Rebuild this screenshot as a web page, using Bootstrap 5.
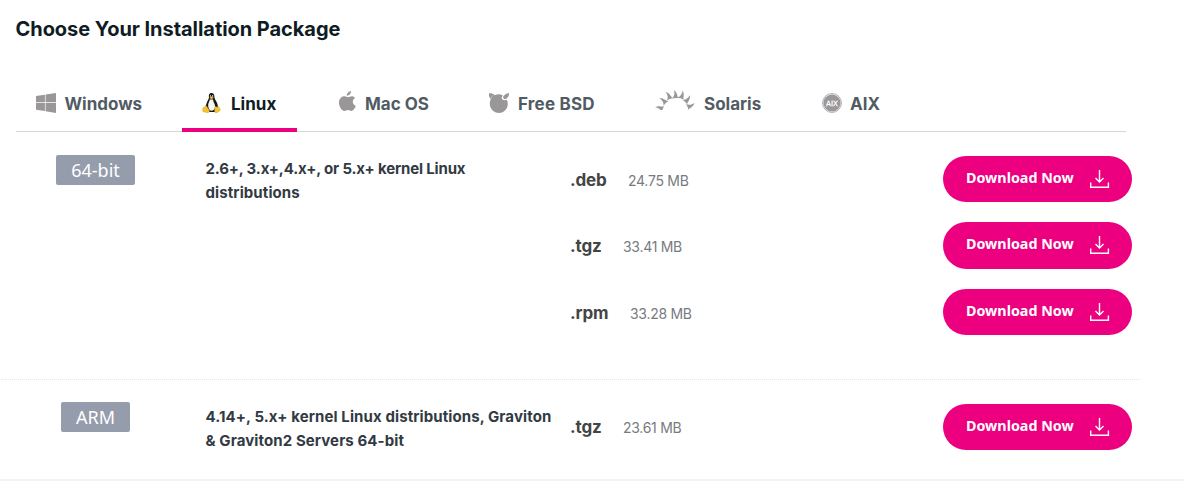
<!DOCTYPE html>
<html lang="en">
<head>
<meta charset="utf-8">
<title>Choose Your Installation Package</title>
<link rel="stylesheet" href="https://cdn.jsdelivr.net/npm/bootstrap@5.3.0/dist/css/bootstrap.min.css">
<style>
body { font-family: Inter, "Liberation Sans", sans-serif; background: #fff; overflow: hidden; }
.page-title { font-size: 20px; line-height: 28px; font-weight: 700; letter-spacing: -.05px; color: #0f1c24; padding: 15px 0 0 15.5px; height: 76px; }
.page-title span, .os-tab span, .req span, .ext, .size, .bits, .dl span { white-space: nowrap; }
.os-tabs { margin-left: 16px; width: 1110px; height: 56px; border-bottom: 1px solid #d6d6d8; gap: 20px; }
.os-tab { height: 56px; padding: 2px 20px 0; color: #525b64; font-size: 17px; font-weight: 700; letter-spacing: 0; border-bottom: 4px solid transparent; text-decoration: none; flex: none; }
.os-tab.active { color: #0f1c24; border-color: #ec0080; }
.os-tab svg { flex: none; fill: #999798; }
.os-tab span { padding-top: 4px; margin-left: 9px; }
.os-tab.w-mac span, .os-tab.w-win span, .os-tab.w-aix span { margin-left: 8px; }
.os-tab.w-bsd span { letter-spacing: .2px; }
.w-win, .w-bsd, .w-sol { width: 146px; } .w-lin { width: 115px; } .w-mac { width: 132px; } .w-aix { width: 99px; }
.w-win svg { margin-right: .4px; }
.w-sol svg { margin-bottom: 6px; }
.w-aix svg { margin-left: 1px; }
.pkg { display: grid; grid-template-columns: 189px 365px 373px 189px; margin-left: 1px; width: 1140px; padding-left: 15px; }
.pkg-x64 { height: 248px; border-bottom: 1px dotted #e8e8e8; padding-top: 23px; }
.pkg-arm { height: 99px; padding-top: 22px; }
.bits { justify-self: start; background: #959cab; color: #fff; font: 18px/31px "Noto Sans", sans-serif; height: 30px; border-radius: 2px; text-align: center; }
.bits-64 { width: 79px; margin-left: 40px; }
.bits-arm { width: 69px; margin-left: 45px; }
.req { font-size: 15px; line-height: 24px; font-weight: 700; letter-spacing: .1px; color: #323a43; margin-top: 2px; padding-left: .5px; }
.pkg-arm .req { margin-top: 3px; }
.req-tight { letter-spacing: -.16px; }
.files { row-gap: 20.2px; margin-top: 1px; }
.file { height: 46.2px; line-height: 46px; padding-top: 1px; }
.ext { font-size: 17px; font-weight: 700; letter-spacing: -.15px; color: #444; }
.ext-deb { width: 58px; } .ext-tgz { width: 53px; } .ext-rpm { width: 60px; }
.size { font-size: 14px; letter-spacing: -.28px; color: #777b80; padding-top: 1px; }
.dl { width: 189px; height: 46.2px; border-radius: 23.5px; background: #ec0080; color: #fff; font: 700 14.3px/20px "Noto Sans", sans-serif; border: 0; padding: 0 22px 0 23px; }
.dl span { padding-bottom: 2px; }
.pkg-arm .files { margin-top: 2px; }
.pkg-arm .file { padding-top: 0; }
.page-end { height: 2px; background: #f3f3f4; }
</style>
</head>
<body>
<h1 class="page-title m-0"><span>Choose Your Installation Package</span></h1>
<nav class="os-tabs d-flex">
  <a class="os-tab w-win d-flex align-items-center" href="#"><svg width="20" height="20" viewBox="0 0 20 20"><path d="M0 3 8.9 1.7V9.2H0zM9.6 1.6 20 0v9.2H9.6zM0 10.1h8.9v7.8L0 16.7zM9.6 10.1H20V20L9.6 18.2z"/></svg><span>Windows</span></a>
  <a class="os-tab active w-lin d-flex align-items-center" href="#"><svg width="20" height="20" viewBox="0 0 20 20"><path fill="#171717" d="M9.4 0C7.5 0 6.7 1.4 6.9 3.2c.2 2.4-.5 3-1.5 5-.8 1.8-1.7 4.2-1.8 6.2l3 4.6h6.2l2.9-4c.5-2.8-.4-5-1.7-7.1-1.4-2-1.4-2.7-1.6-4.6C12.3 1.2 11.2 0 9.4 0z"/><path fill="#f4f4f4" d="M7.8 6.6c-.2 1.6-1.2 3-1.6 4.7-.4 2.3.7 5.5 2.2 6.3 1.7.7 4.2-.5 4.6-2.5.4-2.7-.5-4.4-1.5-6.3l-.5-2.2z"/><path fill="#ddd" d="M8 2.3h1v1.5H8zM10 2.3h1.2v1.5H10z"/><path fill="#f2c530" stroke="#be8b12" stroke-width=".4" d="M7.5 4.8 9.4 3.6l2.2 1.1-2 1.5zM3.7 12.8c1.1 0 1.5 1.4 2.3 2.5.8 1.2 2 2.2 1.2 3.5-.9 1.4-2.2 1-3.5.5-1.1-.5-2.8-.4-3.1-1.2-.2-.8.4-1.5.2-2.7.2-1 1-.7 1.5-1.1.5-.5.6-1.4 1.4-1.5zM13 13.7c.6-.5 1 .4 1.8.4.9 0 1.3-.9 2-.4.6.6.2 1.5 1 2.2.6.6 1 .9.1 1.6-1.4.9-2.3 2.4-4 2.2-1.4-.2-1.5-1.4-1.2-2.7.2-1.2-.2-2.7.3-3.3z"/></svg><span>Linux</span></a>
  <a class="os-tab w-mac d-flex align-items-center" href="#"><svg class="mb-1" width="20" height="20" viewBox="0 0 20 20"><path d="M14 0c.2 2.5-1.9 4.8-4.2 4.7C9.6 2.5 11.7.3 14 0zM18.1 7c-3.4 2-2.8 6.4.7 7.8-.7 2-2.4 5-4.3 5.1-1.4 0-1.9-.8-3.5-.8-1.7 0-2.2.8-3.5.8C4.6 20 1.7 15 2 11c.3-4 3-5.8 5.5-5.8 1.5 0 2.6 1 3.7 1s2.3-1.1 4-1c1.2.1 2.1.7 2.9 1.8z"/></svg><span>Mac OS</span></a>
  <a class="os-tab w-bsd d-flex align-items-center" href="#"><svg width="20" height="20" viewBox="0 0 20 20"><path d="M0 .5C2 0 4 .8 5.1 1.7 3.5 2.7 2.1 4.2 1.3 6 .1 4.2-.2 2 0 .5zM17.8 6.8c3 5.5-1 13.2-7.8 13.2C4.7 20 .8 15.7.8 10.8c0-7.3 7-11.7 13.1-8.4-1.6 1.6-1.4 3.2-.4 4 1.1.9 2.9 1 4.3.4z"/><path d="M3.4 3.2 4.8 1.8l2 .6-3.6 3.2-1.8.5z"/><path d="M20 .3c.7 2-1.8 5.3-3.3 5.8-1.5.4-2.9-.8-2.5-2.3C14.6 2.3 18-.4 20 .3z"/></svg><span>Free BSD</span></a>
  <a class="os-tab w-sol d-flex align-items-center" href="#"><svg width="40" height="20" viewBox="0 0 40 20"><defs><path id="ray" d="M-3.2 8.6C-1 6.2-.2 3.5-1.4 0 1.9 2.2 1.8 5.7 3.1 8.3 1.2 7.7-1.2 7.8-3.2 8.6z"/></defs><use href="#ray" transform="translate(20.3 0)"/><use href="#ray" transform="translate(28.8 1) rotate(23)"/><use href="#ray" transform="translate(35.8 6.3) rotate(46)"/><use href="#ray" transform="translate(40 14) rotate(70)"/><use href="#ray" transform="translate(12 1.5) rotate(-20)"/><use href="#ray" transform="translate(5.3 7.3) rotate(-42)"/><use href="#ray" transform="translate(.4 16) rotate(-66)"/></svg><span>Solaris</span></a>
  <a class="os-tab w-aix d-flex align-items-center" href="#"><svg width="20" height="20" viewBox="0 0 20 20"><circle cx="10" cy="10" r="9.4" fill="#fff" stroke="#aaa" stroke-width="1"/><circle cx="10" cy="10" r="8.6"/><text x="10" y="12.6" text-anchor="middle" font-family="DejaVu Sans, sans-serif" font-size="7.2" font-weight="400" fill="#fff" stroke="#fff" stroke-width=".25">AIX</text></svg><span>AIX</span></a>
</nav>

<section class="pkg pkg-x64">
  <div class="bits bits-64">64-bit</div>
  <div class="req"><span class="req-tight">2.6+, 3.x+,4.x+, or 5.x+ kernel Linux</span><br><span>distributions</span></div>
  <div class="files d-flex flex-column">
    <div class="file d-flex"><span class="ext ext-deb">.deb</span><span class="size">24.75 MB</span></div>
    <div class="file d-flex"><span class="ext ext-tgz">.tgz</span><span class="size">33.41 MB</span></div>
    <div class="file d-flex"><span class="ext ext-rpm">.rpm</span><span class="size">33.28 MB</span></div>
  </div>
  <div class="files d-flex flex-column">
    <button class="dl d-flex align-items-center justify-content-between"><span>Download Now</span><svg width="21" height="20" viewBox="0 0 21 20" fill="none" stroke="#fff" stroke-width="1.4"><path d="M10.5 1v12M6.5 9l4 4 4-4M1.7 13.5v4.8h17.7v-4.8"/></svg></button>
    <button class="dl d-flex align-items-center justify-content-between"><span>Download Now</span><svg width="21" height="20" viewBox="0 0 21 20" fill="none" stroke="#fff" stroke-width="1.4"><path d="M10.5 1v12M6.5 9l4 4 4-4M1.7 13.5v4.8h17.7v-4.8"/></svg></button>
    <button class="dl d-flex align-items-center justify-content-between"><span>Download Now</span><svg width="21" height="20" viewBox="0 0 21 20" fill="none" stroke="#fff" stroke-width="1.4"><path d="M10.5 1v12M6.5 9l4 4 4-4M1.7 13.5v4.8h17.7v-4.8"/></svg></button>
  </div>
</section>
<section class="pkg pkg-arm">
  <div class="bits bits-arm">ARM</div>
  <div class="req"><span>4.14+, 5.x+ kernel Linux distributions, Graviton</span><br><span>&amp; Graviton2 Servers 64-bit</span></div>
  <div class="files"><div class="file d-flex"><span class="ext ext-tgz">.tgz</span><span class="size">23.61 MB</span></div></div>
  <div class="files"><button class="dl d-flex align-items-center justify-content-between"><span>Download Now</span><svg width="21" height="20" viewBox="0 0 21 20" fill="none" stroke="#fff" stroke-width="1.4"><path d="M10.5 1v12M6.5 9l4 4 4-4M1.7 13.5v4.8h17.7v-4.8"/></svg></button></div>
</section>
<div class="page-end"></div>
<script src="https://cdn.jsdelivr.net/npm/bootstrap@5.3.0/dist/js/bootstrap.bundle.min.js"></script>
</body>
</html>
